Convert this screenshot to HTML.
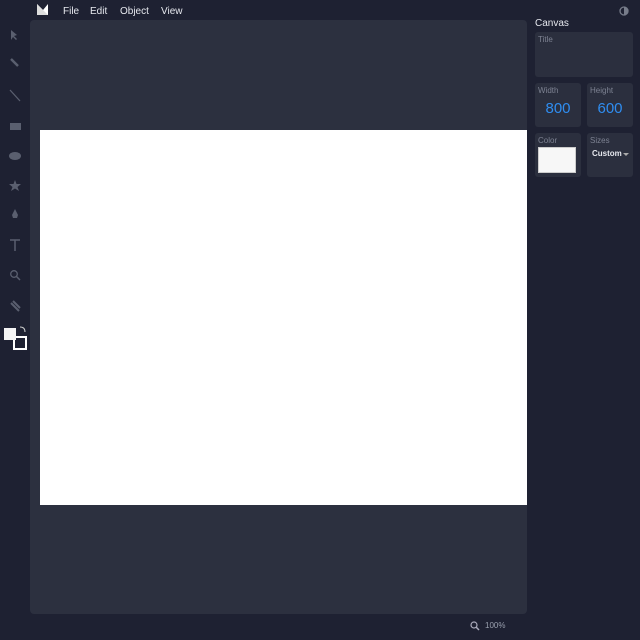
<!DOCTYPE html><html><head><style>
body{margin:0;width:640px;height:640px;background:#1e2132;font-family:"Liberation Sans",sans-serif;position:relative;overflow:hidden}
.a{position:absolute}
.m{color:#e6e8ee;font-size:10px;top:5px}
.box{position:absolute;background:#2b2f3e;border-radius:3px}
.lbl{position:absolute;left:3px;top:3px;font-size:8px;color:#7d8292}
.num{position:absolute;width:100%;text-align:center;top:17px;font-size:15px;color:#2f8df0}
</style></head><body>
<svg class="a" style="left:37px;top:4px" width="11" height="11"><path d="M0 0L6 6L11 0V11H0Z" fill="#fff"/><path d="M0 0L11 11H0Z" fill="#ddd"/></svg>
<div class="a m" style="left:63px;top:6px">File</div>
<div class="a m" style="left:90px;top:6px">Edit</div>
<div class="a m" style="left:120px;top:6px">Object</div>
<div class="a m" style="left:161px;top:6px">View</div>
<svg class="a" style="left:619px;top:6px" width="10" height="10"><circle cx="5" cy="5" r="4" fill="none" stroke="#777c8a" stroke-width="1.3"/><path d="M5 1A4 4 0 0 1 5 9Z" fill="#777c8a"/></svg>
<svg class="a" style="left:0;top:21px" width="30" height="330" fill="#5a5f6f" stroke="#5a5f6f">
<path d="M11 9L11 19L13 16L16 19L17 18L14 15L17 14Z" stroke="none"/>
<path d="M11 38L18 45" stroke-width="2.5"/>
<path d="M10 69L20 80" stroke-width="1.3"/>
<rect x="10" y="102" width="11" height="7" stroke="none"/>
<ellipse cx="15" cy="135" rx="6" ry="4" stroke="none"/>
<path d="M15 159L16.5 163L21 163L17.5 166L19 170L15 167.5L11 170L12.5 166L9 163L13.5 163Z" stroke="none"/>
<path d="M15 188L18 194L17 197H13L12 194Z" stroke="none"/>
<path d="M10 219H20M15 219V230" stroke-width="1.5" fill="none"/>
<circle cx="14" cy="253" r="3.3" fill="none" stroke-width="1.3"/><path d="M16.5 255.5L20 259" stroke-width="1.5"/>
<path d="M11 282L19 290M13 280L20 287" stroke-width="2"/>
</svg>
<div class="a" style="left:13px;top:336px;width:10px;height:10px;border:2px solid #fff"></div>
<div class="a" style="left:4px;top:328px;width:12px;height:12px;background:#f4f4f4"></div>
<svg class="a" style="left:19px;top:326px" width="8" height="8"><path d="M1 1Q6 1 6 6" fill="none" stroke="#ccc"/></svg>
<div class="box" style="left:30px;top:20px;width:497px;height:594px;border-radius:4px;background:#2c303f"></div>
<div class="a" style="left:40px;top:130px;width:487px;height:375px;background:#fff"></div>
<div class="a" style="left:535px;top:18px;font-size:10px;color:#e6e8ee">Canvas</div>
<div class="box" style="left:535px;top:32px;width:98px;height:45px"><div class="lbl">Title</div></div>
<div class="box" style="left:535px;top:83px;width:46px;height:44px"><div class="lbl">Width</div><div class="num">800</div></div>
<div class="box" style="left:587px;top:83px;width:46px;height:44px"><div class="lbl">Height</div><div class="num">600</div></div>
<div class="box" style="left:535px;top:133px;width:46px;height:44px"><div class="lbl">Color</div><div class="a" style="left:3px;top:14px;width:36px;height:24px;background:#f7f7f7;border:1px solid #ccc"></div></div>
<div class="box" style="left:587px;top:133px;width:46px;height:44px"><div class="lbl">Sizes</div><div class="a" style="left:5px;top:16px;font-size:8px;font-weight:bold;color:#e6e8ee">Custom</div><div class="a" style="left:36px;top:20px;border:3px solid transparent;border-top:3px solid #aaa"></div></div>
<svg class="a" style="left:470px;top:621px" width="10" height="10"><circle cx="4" cy="4" r="3" fill="none" stroke="#aab" stroke-width="1.2"/><path d="M6 6L9 9" stroke="#aab" stroke-width="1.5"/></svg>
<div class="a" style="left:485px;top:621px;font-size:8px;color:#9aa0ae">100%</div>
</body></html>
